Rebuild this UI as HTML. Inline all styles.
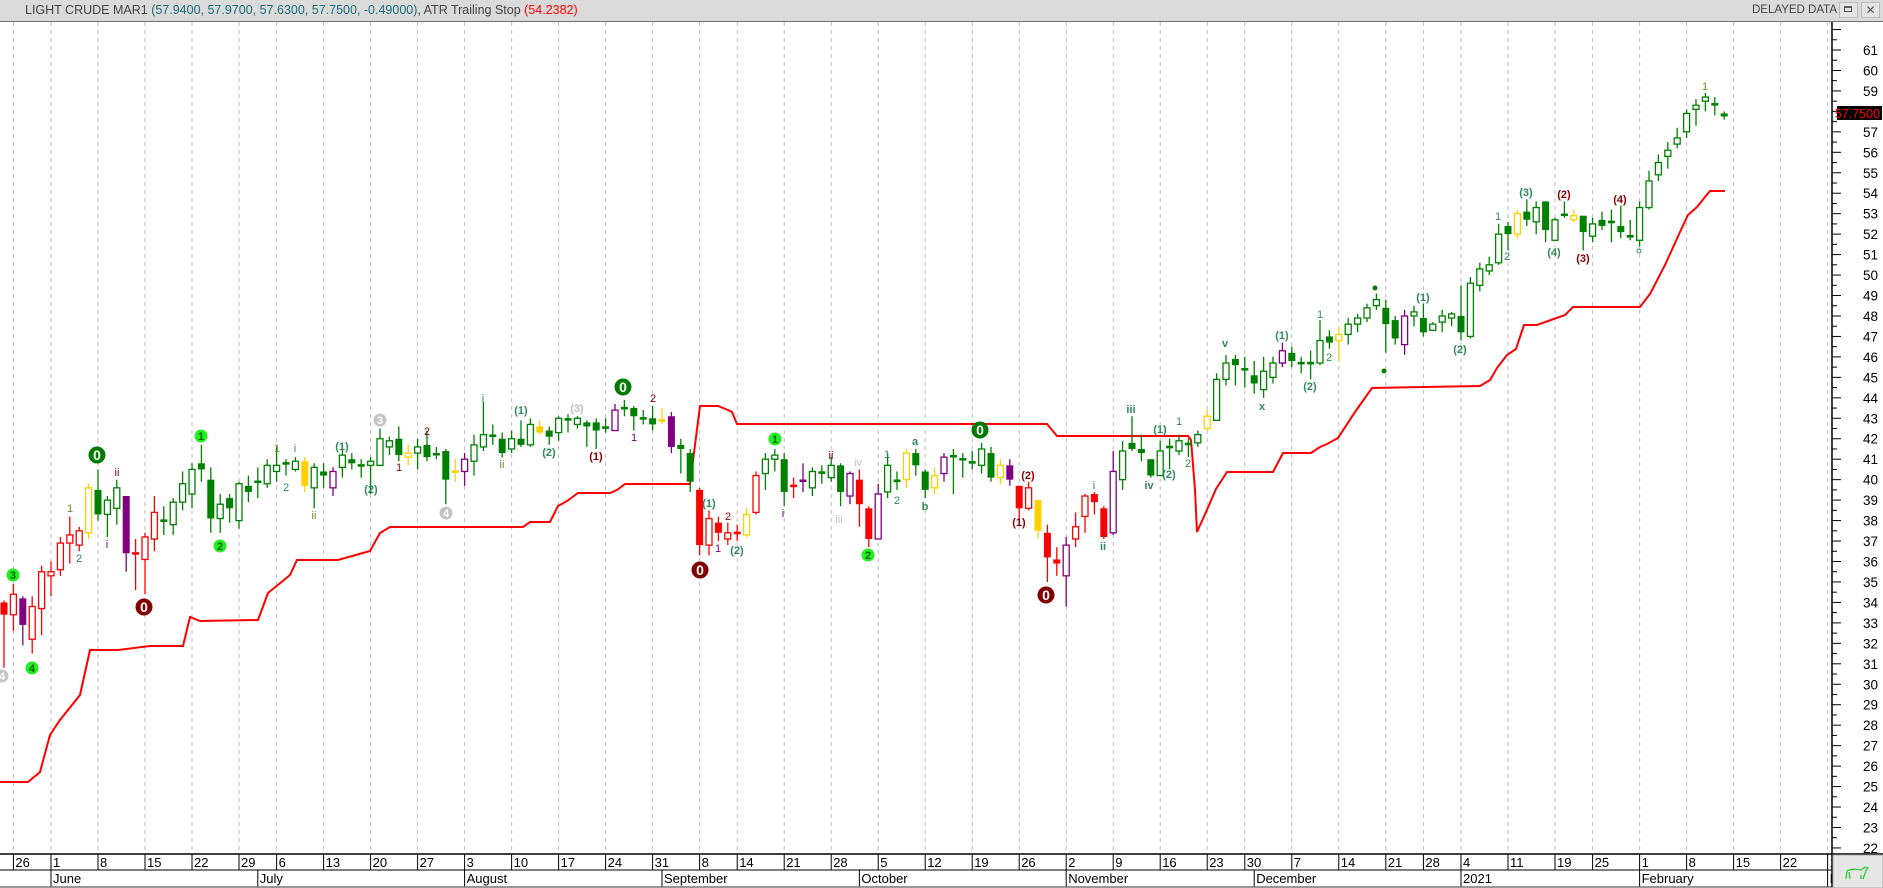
<!DOCTYPE html>
<html><head><meta charset="utf-8">
<style>
html,body{margin:0;padding:0;background:#fff;width:1883px;height:888px;overflow:hidden;font-family:"Liberation Sans",sans-serif;}
#hdr{position:absolute;left:0;top:0;width:1883px;height:21px;background:#dadada;border-bottom:1px solid #707070;}
#hdr .t{position:absolute;left:25px;top:3px;font-size:12.5px;color:#444;white-space:nowrap;}
#hdr .t .v{color:#1a6f7a;} #hdr .t .r{color:#f00;}
#hdr .d{position:absolute;left:1752px;top:4px;font-size:11.5px;color:#444;white-space:nowrap;}
.btn{position:absolute;top:2px;width:17px;height:14px;border:1px solid #bbb;background:#e4e4e4;}
svg{position:absolute;left:0;top:0;}
</style></head><body>
<div id="hdr"><div class="t">LIGHT CRUDE MAR1 <span class="v">(57.9400, 57.9700, 57.6300, 57.7500, -0.49000)</span>, ATR Trailing Stop <span class="r">(54.2382)</span></div>
<div class="d">DELAYED DATA</div>
<div class="btn" style="left:1839px"><div style="position:absolute;left:4px;top:3px;width:8px;height:6px;border:1px solid #555;border-top-width:2px;box-sizing:border-box"></div></div>
<div class="btn" style="left:1861px;font-size:12px;text-align:center;line-height:14px;color:#555">✕</div>
</div>
<svg id="s" width="1883" height="888" xmlns="http://www.w3.org/2000/svg" style="top:0">
<g id="grid"></g><g id="stop"></g><g id="cand"></g><g id="lab" font-family="Liberation Sans, sans-serif" font-size="11" text-anchor="middle"></g><g id="axis"></g>
</svg>
<script>
var Y=function(p){return 50+(61-p)*20.46;};
var D="R 34.0 33.4 34.1 30.8|r 33.4 34.4 34.9 32.6|P 34.2 32.9 34.3 31.9|r 32.2 33.8 34.3 31.5|r 33.7 35.5 35.8 32.4|r 35.3 35.5 36 34.3|r 35.6 36.9 37.2 35.3|r 36.9 37.3 38.2 35.9|r 36.8 37.5 37.7 36.5|y 37.4 39.6 39.8 37.1|G 39.5 38.3 40.5 38.0|g 38.3 39.0 39.2 37.2|g 38.6 39.6 40.0 37.8|P 39.2 36.4 39.2 35.5|r 36.4 36.4 37.1 34.6|r 36.1 37.2 37.4 34.4|r 37.1 38.4 39.2 36.5|g 38 38 38.7 37.3|g 37.8 38.9 39.1 37.3|g 38.9 39.8 40.4 38.5|g 39.3 40.5 40.8 38.6|G 40.8 40.5 41.7 39.9|G 40.0 38.1 40.6 37.4|g 38.1 38.8 39.3 37.4|G 39.1 38.6 39.3 37.9|g 38.0 39.8 39.9 37.6|G 39.7 39.4 40.2 38.9|g 39.9 39.9 40.6 39.1|g 39.8 40.7 41.0 39.6|g 40.4 40.7 41.6 39.9|g 40.8 40.8 41.0 40.2|g 40.5 40.9 41.1 40.4|Y 40.9 39.7 41.1 39.4|g 39.6 40.6 40.8 38.6|G 40.4 40.2 40.8 39.6|p 39.6 40.4 40.6 39.2|g 40.6 41.2 41.5 40.1|G 41.0 40.8 41.3 40.5|g 40.7 40.7 41.0 40.1|g 40.7 40.9 41.1 39.3|g 40.7 42.0 42.5 40.7|g 41.6 41.9 42.1 41.2|G 42.0 41.2 42.6 40.9|y 41.1 41.3 41.7 40.7|g 41.3 41.6 42.0 40.5|G 41.7 41.1 42.4 40.9|g 41.2 41.3 41.6 41.0|G 41.4 40.0 41.5 38.8|y 40.4 40.4 41.0 39.9|p 40.4 41.0 41.3 39.7|g 40.9 41.7 42.2 40.2|"+
"g 41.6 42.2 43.8 41.4|G 42.2 42.1 42.7 41.7|G 42.0 41.3 42.3 41.1|g 41.5 42.0 42.4 41.3|G 42.0 41.7 42.9 41.6|g 41.7 42.7 43.0 41.6|Y 42.6 42.3 42.9 42.2|G 42.4 42.1 42.6 41.7|g 42.3 43.0 43.1 41.9|g 42.9 43.0 43.2 42.3|g 42.7 43.0 43.1 42.5|G 42.8 42.6 42.9 41.6|G 42.8 42.4 43.0 41.5|g 42.5 42.6 43.0 42.3|p 42.4 43.4 43.7 42.4|g 43.5 43.5 43.9 43.1|G 43.5 43.1 43.6 42.4|g 43.0 43.0 43.4 42.7|G 43.0 42.7 43.6 42.4|y 42.9 42.9 43.5 42.7|P 43.1 41.6 43.3 41.3|G 41.7 41.5 42.0 40.3|G 41.3 39.9 41.5 39.4|R 39.5 36.8 39.6 36.3|r 36.8 38.1 38.5 36.3|R 37.9 37.4 38.2 37.0|r 37.1 37.4 37.9 36.8|r 37.4 37.4 37.8 37.0|y 37.3 38.3 38.6 37.2|r 38.4 40.2 40.4 38.3|g 40.3 41.0 41.3 39.5|g 41.0 41.2 41.5 40.4|G 41.0 39.4 41.3 38.7|r 39.7 39.7 40.1 39.1|p 39.9 40.0 40.8 39.4|g 39.6 40.4 40.6 39.2|g 40.3 40.4 40.7 39.8|g 40.1 40.7 41.1 39.9|G 40.7 39.4 40.8 38.7|p 39.2 40.3 40.4 38.8|R 40.0 38.8 40.5 37.7|R 38.6 37.1 38.7 36.7|p 37.1 39.3 39.8 37.1|g 39.4 40.7 41.3 39.1|g 39.9 40.0 40.4 39.5|y 40.0 41.3 41.5 39.6|G 41.3 40.7 41.5 40.2|G 40.4 39.5 40.5 39.1|y 39.6 40.2 40.6 39.3|p 40.3 41.1 41.3 39.9|"+
"G 41.2 41.1 41.5 39.3|g 41.0 41.0 41.3 40.1|g 40.8 40.9 41.4 40.5|g 40.7 41.5 41.8 40.3|G 41.3 40.1 41.6 39.9|y 40.1 40.7 41.0 39.8|P 40.7 40.0 41.0 39.7|R 39.7 38.6 39.7 38.1|r 38.6 39.6 39.9 38.5|Y 39.0 37.5 39.0 37.1|R 37.4 36.2 37.8 35.0|R 36.1 35.9 36.7 35.3|p 35.3 36.8 37.2 33.8|r 37.1 37.7 38.4 36.7|r 38.2 39.2 39.3 37.4|R 39.3 38.9 39.4 38.3|R 38.6 37.2 38.7 37.1|p 37.4 40.4 41.4 37.3|g 40.0 41.4 41.9 39.5|G 41.8 41.5 43.1 41.4|G 41.5 41.3 42.2 40.9|G 41.0 40.2 41.0 40.1|g 40.2 41.4 41.9 40.2|g 41.6 41.6 42.0 40.5|g 41.4 41.9 42.2 41.2|g 41.7 41.8 42.0 41.1|g 41.8 42.2 42.4 41.6|y 42.5 43.1 43.4 42.4|g 42.9 44.9 45.2 42.9|g 44.9 45.7 46.1 44.6|G 45.9 45.6 46.1 44.6|g 45.4 45.4 46.0 44.5|G 45.1 44.7 45.8 44.2|g 44.4 45.3 46.0 44.0|g 45.0 45.7 46.0 44.7|p 45.7 46.3 46.7 45.5|G 46.2 45.8 46.5 45.5|g 45.7 45.7 46.0 45.2|g 45.7 45.7 46.3 44.9|g 45.7 46.8 47.8 45.6|G 47.0 46.7 47.3 46.4|y 46.8 47.1 47.5 45.8|g 47.1 47.6 47.9 46.6|g 47.6 47.9 48.1 47.2|g 47.9 48.4 48.6 47.7|g 48.5 48.8 49.1 48.3|G 48.4 47.6 48.8 46.2|G 47.8 46.9 48.0 46.6|p 46.6 48.0 48.3 46.1|g 48.0 48.2 48.5 47.5|"+
"G 47.9 47.2 48.6 47.0|g 47.3 47.6 47.7 47.3|g 47.7 48.0 48.3 47.2|g 47.9 48.1 48.2 47.5|G 48.0 47.2 49.5 46.8|g 47.0 49.6 49.9 46.9|g 49.5 50.3 50.6 49.2|g 50.2 50.5 50.9 50.0|g 50.6 52.0 52.5 50.5|G 52.4 52.0 52.6 51.2|y 52.0 53.0 53.2 51.8|G 53.1 52.7 53.7 52.4|g 52.6 53.3 53.6 52.0|G 53.6 52.2 53.6 51.6|g 51.7 52.7 52.8 51.7|g 52.9 53.0 53.6 52.8|y 52.7 52.9 53.2 52.6|G 52.9 52.1 52.9 51.2|g 51.9 52.5 52.8 51.6|G 52.7 52.4 53.1 52.2|g 52.6 52.6 53.2 51.6|G 52.4 52.1 53.4 51.8|g 51.9 51.9 52.7 51.7|g 51.7 53.3 53.6 51.4|g 53.3 54.6 55.1 53.2|g 54.9 55.5 55.9 54.6|g 55.8 56.1 56.5 55.2|g 56.4 56.7 57.2 56.2|g 57.0 57.9 58.1 56.7|g 58.1 58.3 58.6 57.3|g 58.5 58.7 58.9 58.0|G 58.4 58.3 58.7 57.8|G 57.9 57.75 58.0 57.6";
var C={g:'#008000',G:'#008000',r:'#f00',R:'#f00',y:'#ffd000',Y:'#ffd000',p:'#800080',P:'#800080'};
var s='';
D.split('|').forEach(function(r,i){var a=r.trim().split(' ');var t=a[0],o=+a[1],c=+a[2],h=+a[3],l=+a[4];var x=4+i*9.4,col=C[t];
s+='<line x1="'+x+'" x2="'+x+'" y1="'+Y(h)+'" y2="'+Y(l)+'" stroke="'+col+'" stroke-width="1.3"/>';
var y1=Y(Math.max(o,c)),y2=Y(Math.min(o,c));
if(y2-y1<2.5){s+='<rect x="'+(x-3.5)+'" y="'+((y1+y2)/2-1.2)+'" width="7" height="2.6" fill="'+col+'"/>';}
else if(t==t.toUpperCase()){s+='<rect x="'+(x-3.5)+'" y="'+y1+'" width="7" height="'+(y2-y1)+'" fill="'+col+'"/>';}
else{s+='<rect x="'+(x-3)+'" y="'+y1+'" width="6" height="'+(y2-y1)+'" fill="#fff" stroke="'+col+'" stroke-width="1.3"/>';}
});
document.getElementById('cand').innerHTML=s;
var P=[[0,782],[28,782],[40,772],[50,735],[60,720],[80,695],[90,650],[118,650],[150,646],[183,646],[190,617],[200,621],[258,620],[268,593],[290,575],[297,560],[338,560],[345,558],[370,551],[380,533],[390,527],[523,527],[530,522],[550,522],[558,506],[567,501],[578,493],[610,493],[617,490],[625,484],[690,484],[700,406],[718,406],[728,410],[732,412],[737,424],[1047,424],[1057,436],[1188,436],[1191,440],[1195,490],[1197,532],[1206,512],[1216,489],[1227,472],[1273,472],[1283,453],[1311,453],[1320,447],[1327,444],[1338,438],[1355,412],[1372,388],[1480,386],[1490,380],[1497,368],[1507,355],[1516,349],[1524,325],[1537,325],[1565,315],[1573,307],[1640,307],[1650,294],[1665,265],[1680,232],[1688,215],[1697,207],[1705,197],[1710,191],[1725,191]];
document.getElementById('stop').innerHTML='<polyline fill="none" stroke="#f00" stroke-width="2" points="'+P.map(function(p){return p.join(',')}).join(' ')+'"/>';
var hol={'2020-05-25':1,'2020-07-03':1,'2020-09-07':1,'2020-11-26':1,'2020-12-25':1,'2021-01-01':1,'2021-01-18':1};
var M=['January','February','March','April','May','June','July','August','September','October','November','December'];
var g='',ax='';var d=Date.UTC(2020,4,22),idx=0,pd=-1,pm=-1;
while(true){var dt=new Date(d);var dow=dt.getUTCDay();var key=dt.toISOString().slice(0,10);
 if(dow!=0&&dow!=6&&!(hol[key])){var x=4+idx*9.4;if(x>1832)break;
  if(idx>0&&dow<=pd){g+='<line x1="'+x+'" x2="'+x+'" y1="22" y2="854" stroke="#bdbdbd" stroke-dasharray="4,4"/>';
   ax+='<line x1="'+x+'" x2="'+x+'" y1="854" y2="870" stroke="#000"/><text x="'+(x+2)+'" y="867">'+dt.getUTCDate()+'</text>';}
  var m=dt.getUTCMonth();if(idx>0&&m!=pm){var nm=m==0?'2021':M[m];ax+='<line x1="'+x+'" x2="'+x+'" y1="870" y2="887" stroke="#000"/><text x="'+(x+2)+'" y="883">'+nm+'</text>';}
  pd=dow;pm=m;idx++;}
 d+=86400000;}
document.getElementById('grid').innerHTML=g;
var a='<g font-family="Liberation Sans, sans-serif" font-size="13" fill="#000">'+ax+'</g>';
a+='<rect x="1832" y="22" width="51" height="832" fill="#fff"/>';
a+='<line x1="0" x2="1883" y1="854" y2="854" stroke="#000" stroke-width="1.5"/><line x1="0" x2="1832" y1="870" y2="870" stroke="#000"/><line x1="0" x2="1883" y1="887" y2="887" stroke="#777" stroke-width="1.5"/>';
a+='<line x1="1832" x2="1832" y1="22" y2="887" stroke="#000" stroke-width="1.5"/>';
var tx='';for(var p=22;p<=62;p++){var y=Y(p);if(y<24)continue;a+='<line x1="1832" x2="1841" y1="'+y+'" y2="'+y+'" stroke="#000"/>';if(p<=61)tx+='<text x="1878" y="'+(y+5)+'">'+p+'</text>';var yh=Y(p+0.5);if(yh>24)a+='<line x1="1832" x2="1837" y1="'+yh+'" y2="'+yh+'" stroke="#000"/>';}
a+='<g font-family="Liberation Sans, sans-serif" font-size="13.5" text-anchor="end" fill="#000">'+tx+'</g>';
a+='<rect x="1837" y="106" width="45" height="14" fill="#000"/><text x="1880" y="118" font-family="Liberation Sans, sans-serif" font-size="12.5" text-anchor="end" fill="#f00">57.7500</text>';
a+='<rect x="1833" y="855" width="50" height="33" fill="#e6e6e6" stroke="#aaa"/><path d="M1846 879 l1 -8 q6 -3 14 -1 l4 -3 l3 1 l-2 3 l-2 5 l-1 3 m-13 0 l-1 -7 m12 7 l0 -4" fill="none" stroke="#3c3" stroke-width="1.3"/>';
document.getElementById('axis').innerHTML=a;
var L=[
['c0',97,455,'dg'],['t',117,476,'ii','#8b0000'],['t',70,512,'1','#6b8e23'],['t',107,548,'i','#800080'],['t',79,562,'2','#2e8b57'],['c0',144,607,'dr'],['c1',201,436,'bg'],['c2',220,546,'bg'],['c3',13,575,'bg'],['c4',32,668,'bg'],['c4',2,676,'gy'],
['t',277,452,'1','#6b8e23'],['t',286,491,'2','#2e8b57'],['t',295,452,'i','#2e8b57'],['t',314,519,'ii','#6b8e23'],['tb',342,450,'(1)','#2e8b57'],['tb',371,493,'(2)','#2e8b57'],['c3',380,420,'gy'],['c4',446,513,'gy'],['t',427,435,'2','#8b0000'],['t',399,471,'1','#8b0000'],
['t',483,402,'i','#2e8b57'],['t',502,468,'ii','#6b8e23'],['tb',521,414,'(1)','#2e8b57'],['tb',549,456,'(2)','#2e8b57'],['tb',577,412,'(3)','#c0c0c0'],['tb',596,460,'(1)','#8b0000'],['c0',623,387,'dg'],['t',634,441,'1','#800080'],['t',653,402,'2','#8b0000'],
['c0',700,570,'dr'],['tb',709,507,'(1)','#2e8b57'],['t',728,520,'2','#8b0000'],['t',718,552,'1','#800080'],['tb',737,554,'(2)','#2e8b57'],['c1',775,439,'bg'],['t',783,517,'i','#800080'],['t',831,459,'ii','#8b0000'],['t',839,523,'iii','#c0c0c0'],['t',858,466,'iv','#c0c0c0'],['c2',868,555,'bg'],['t',887,458,'1','#2e8b57'],['t',897,504,'2','#2e8b57'],['tb',915,445,'a','#2e8b57'],['tb',925,510,'b','#2e8b57'],
['c0',980,430,'dg'],['tb',1028,479,'(2)','#8b0000'],['tb',1019,526,'(1)','#8b0000'],['c0',1046,595,'dr'],['t',1094,489,'i','#2e8b57'],['tb',1103,550,'ii','#2e8b57'],['tb',1131,413,'iii','#2e8b57'],['tb',1149,489,'iv','#2e8b57'],['tb',1160,433,'(1)','#2e8b57'],['tb',1169,478,'(2)','#2e8b57'],['t',1179,425,'1','#2e8b57'],['t',1188,467,'2','#2e8b57'],
['tb',1225,347,'v','#2e8b57'],['tb',1262,410,'x','#2e8b57'],['tb',1282,339,'(1)','#2e8b57'],['tb',1310,390,'(2)','#2e8b57'],['t',1320,318,'1','#2e8b57'],['t',1329,361,'2','#2e8b57'],['d',1375,288],['d',1384,371],['tb',1423,301,'(1)','#2e8b57'],['tb',1460,353,'(2)','#2e8b57'],['t',1498,220,'1','#2e8b57'],['t',1507,260,'2','#2e8b57'],['tb',1526,196,'(3)','#2e8b57'],['tb',1554,256,'(4)','#2e8b57'],['tb',1564,198,'(2)','#8b0000'],['tb',1583,262,'(3)','#8b0000'],['tb',1620,203,'(4)','#8b0000'],['o',1639,251],['t',1705,90,'1','#6b8e23']];
var ls='';
L.forEach(function(q){var k=q[0];
 if(k[0]=='c'){var n=k[1],st=q[3],big=(n=='0'&&st!='gy');var r=big?8.5:6.5;var f={dg:'#007a00',dr:'#800000',bg:'#22ee22',gy:'#c4c4c4'}[st];var tc=(st=='bg')?'#006400':'#fff';
  ls+='<circle cx="'+q[1]+'" cy="'+q[2]+'" r="'+r+'" fill="'+f+'"/><text x="'+q[1]+'" y="'+(q[2]+(big?5:4))+'" font-size="'+(big?14:11)+'" font-weight="bold" fill="'+tc+'">'+n+'</text>';}
 else if(k=='d'){ls+='<circle cx="'+q[1]+'" cy="'+q[2]+'" r="2.5" fill="#008000"/>';}
 else if(k=='o'){ls+='<circle cx="'+q[1]+'" cy="'+q[2]+'" r="2" fill="none" stroke="#2e8b57"/>';}
 else{ls+='<text x="'+q[1]+'" y="'+q[2]+'" fill="'+q[4]+'"'+(k=='tb'?' font-weight="bold"':'')+'>'+q[3]+'</text>';}
});
document.getElementById('lab').innerHTML=ls;
</script>
</body></html>
